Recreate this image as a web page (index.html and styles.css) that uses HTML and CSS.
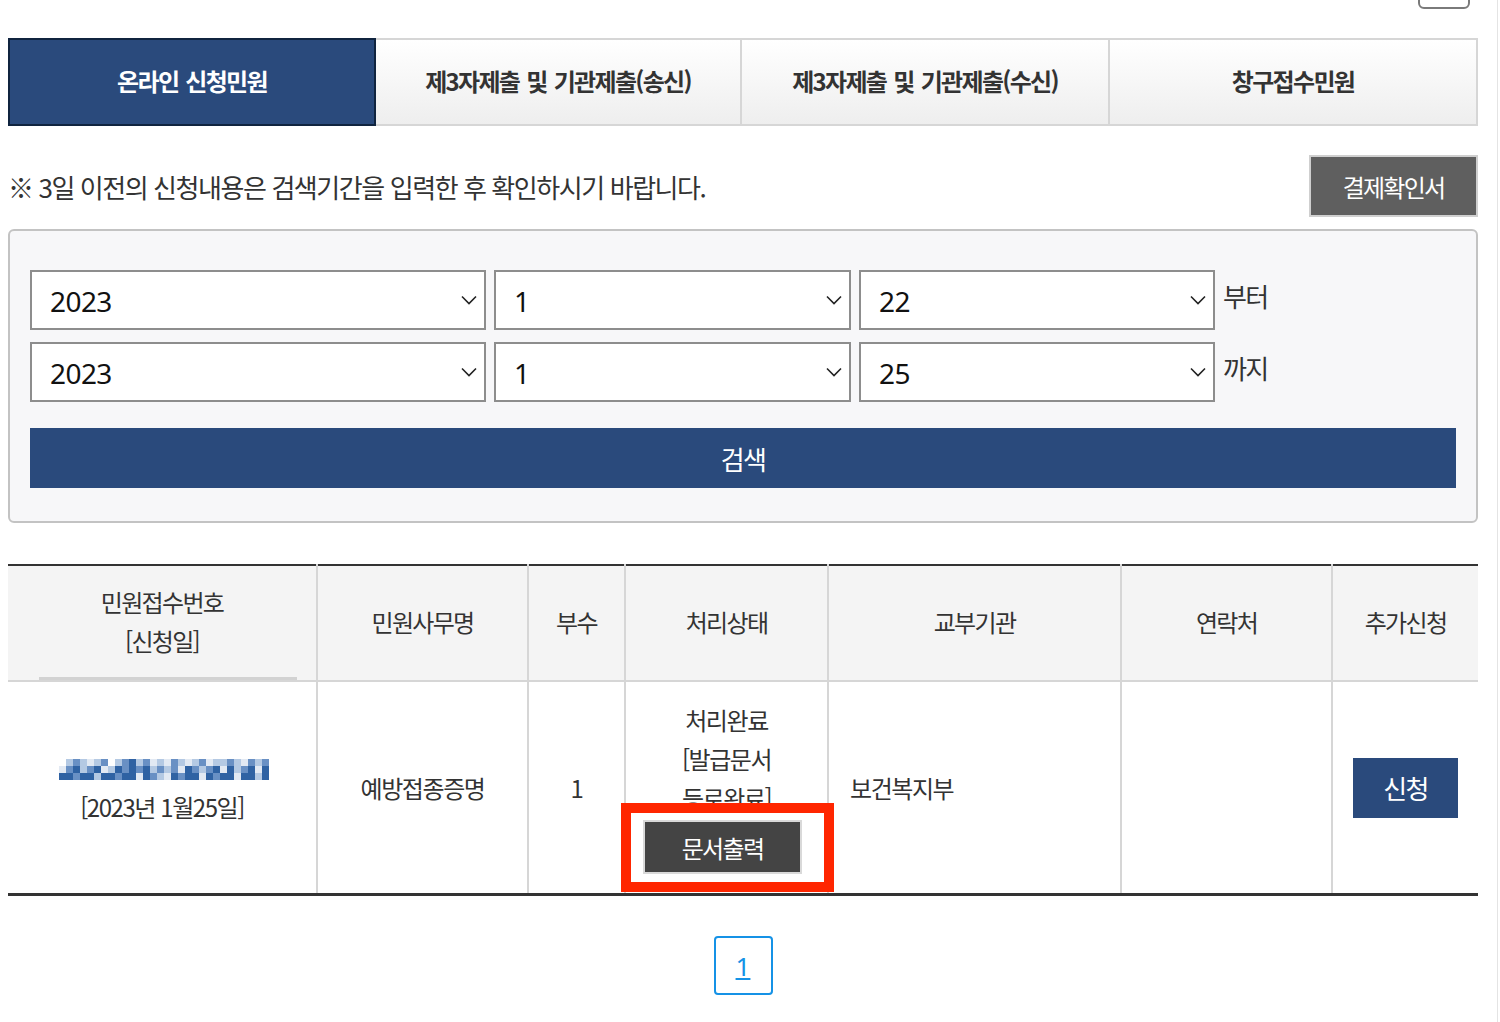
FILE: index.html
```html
<!DOCTYPE html>
<html lang="ko">
<head>
  <meta charset="UTF-8" />
  <meta name="viewport" content="width=device-width, initial-scale=1.0"/>
  <title>신청민원 조회</title>
  <link rel="stylesheet" href="styles.css">
</head>
<body>
  <div class="page">
    <div class="container">

      <div class="top-bar">
        <div class="top-btn"></div>
      </div>

      <div class="tabs">
        <div class="tab active">온라인 신청민원</div>
        <div class="tab">제3자제출 및 기관제출(송신)</div>
        <div class="tab">제3자제출 및 기관제출(수신)</div>
        <div class="tab">창구접수민원</div>
      </div>

      <div class="notice-row">
        <p class="notice">※ 3일 이전의 신청내용은 검색기간을 입력한 후 확인하시기 바랍니다.</p>
        <button class="btn-receipt">결제확인서</button>
      </div>

      <div class="search-box">
        <div class="date-row">
          <div class="select-wrap year">
            <select><option>2023</option></select>
            <svg class="chevron" viewBox="0 0 16 10"><path d="M1 1.5l7 7 7-7"/></svg>
          </div>
          <div class="select-wrap month">
            <select><option>1</option></select>
            <svg class="chevron" viewBox="0 0 16 10"><path d="M1 1.5l7 7 7-7"/></svg>
          </div>
          <div class="select-wrap day">
            <select><option>22</option></select>
            <svg class="chevron" viewBox="0 0 16 10"><path d="M1 1.5l7 7 7-7"/></svg>
          </div>
          <span class="date-label">부터</span>
        </div>
        <div class="date-row">
          <div class="select-wrap year">
            <select><option>2023</option></select>
            <svg class="chevron" viewBox="0 0 16 10"><path d="M1 1.5l7 7 7-7"/></svg>
          </div>
          <div class="select-wrap month">
            <select><option>1</option></select>
            <svg class="chevron" viewBox="0 0 16 10"><path d="M1 1.5l7 7 7-7"/></svg>
          </div>
          <div class="select-wrap day">
            <select><option>25</option></select>
            <svg class="chevron" viewBox="0 0 16 10"><path d="M1 1.5l7 7 7-7"/></svg>
          </div>
          <span class="date-label">까지</span>
        </div>
        <button class="btn-search">검색</button>
      </div>

      <table class="result-table">
        <colgroup>
          <col style="width:309px">
          <col style="width:211px">
          <col style="width:97px">
          <col style="width:203px">
          <col style="width:293px">
          <col style="width:211px">
          <col style="width:146px">
        </colgroup>
        <thead>
          <tr>
            <th class="first-th">민원접수번호<br>[신청일]</th>
            <th>민원사무명</th>
            <th>부수</th>
            <th>처리상태</th>
            <th>교부기관</th>
            <th>연락처</th>
            <th>추가신청</th>
          </tr>
        </thead>
        <tbody>
          <tr>
            <td class="receipt">
              <!-- 접수번호 모자이크 처리 -->
              <svg class="masked-no" viewBox="0 0 210 21">
                <path fill="#e2e9f3" d="M28 0h7v7h-7zM91 0h7v7h-7zM105 0h7v7h-7zM126 0h7v7h-7zM147 0h7v7h-7zM182 0h7v7h-7zM0 7h7v7h-7zM42 7h7v7h-7zM119 7h7v7h-7zM161 7h7v7h-7zM196 7h7v7h-7zM77 14h7v7h-7zM105 14h7v7h-7zM140 14h7v7h-7zM175 14h7v7h-7z"/>
                <path fill="#b4c9e3" d="M7 0h7v7h-7zM21 0h7v7h-7zM35 0h7v7h-7zM56 0h7v7h-7zM77 0h7v7h-7zM98 0h7v7h-7zM119 0h7v7h-7zM133 0h7v7h-7zM154 0h14v7h-14zM175 0h7v7h-7zM196 0h7v7h-7zM21 7h7v7h-7zM49 7h7v7h-7zM91 7h7v7h-7zM105 7h7v7h-7zM140 7h7v7h-7zM175 7h7v7h-7zM35 14h7v7h-7zM98 14h7v7h-7zM196 14h7v7h-7z"/>
                <path fill="#6990c4" d="M14 0h7v7h-7zM42 0h7v7h-7zM63 0h7v7h-7zM84 0h7v7h-7zM112 0h7v7h-7zM140 0h7v7h-7zM168 0h7v7h-7zM189 0h7v7h-7zM203 0h7v7h-7zM7 7h7v7h-7zM28 7h7v7h-7zM63 7h7v7h-7zM77 7h7v7h-7zM98 7h7v7h-7zM112 7h7v7h-7zM133 7h7v7h-7zM147 7h7v7h-7zM182 7h7v7h-7zM14 14h7v7h-7zM56 14h7v7h-7zM91 14h7v7h-7zM119 14h7v7h-7zM154 14h7v7h-7z"/>
                <path fill="#2f62a3" d="M70 0h7v7h-7zM14 7h7v7h-7zM35 7h7v7h-7zM56 7h7v7h-7zM70 7h7v7h-7zM84 7h7v7h-7zM126 7h7v7h-7zM154 7h7v7h-7zM168 7h7v7h-7zM189 7h7v7h-7zM203 7h7v7h-7zM0 14h14v7h-14zM21 14h14v7h-14zM42 14h14v7h-14zM63 14h14v7h-14zM84 14h7v7h-7zM112 14h7v7h-7zM126 14h14v7h-14zM147 14h7v7h-7zM161 14h14v7h-14zM182 14h14v7h-14zM203 14h7v7h-7z"/>
              </svg>
              <div>[2023년 1월25일]</div>
            </td>
            <td>예방접종증명</td>
            <td>1</td>
            <td class="status">
              처리완료<br>[발급문서<br>등로완료]
              <div><button class="btn-print">문서출력</button></div>
              <span class="highlight"></span>
            </td>
            <td class="left">보건복지부</td>
            <td></td>
            <td><button class="btn-apply">신청</button></td>
          </tr>
        </tbody>
      </table>

      <div class="pagination">
        <a href="#" class="page-num">1</a>
      </div>

    </div>
  </div>
</body>
</html>
```

FILE: styles.css
```css
body {
  margin: 0;
  padding: 0;
  font-family: "Noto Sans CJK KR", "Noto Sans", sans-serif;
  color: #333;
  background: #fff;
}

.page {
  width: 1497px;
  min-height: 1022px;
  border-right: 1px solid #e4e4e4;
}

.container {
  width: 1470px;
  margin-left: 8px;
}

/* top edge, partly scrolled out */
.top-bar {
  display: flex;
  justify-content: flex-end;
  height: 9px;
}

.top-btn {
  width: 52px;
  height: 22px;
  margin-top: -13px;
  margin-right: 8px;
  border: 2px solid #7a7a7a;
  border-radius: 6px;
  box-sizing: border-box;
}

/* tabs */
.tabs {
  display: grid;
  grid-template-columns: 368px 366px 368px 368px;
  margin-top: 29px;
  height: 88px;
}

.tab {
  display: flex;
  align-items: center;
  justify-content: center;
  padding-bottom: 3px;
  font-size: 24px;
  font-weight: bold;
  letter-spacing: -0.07em;
  word-spacing: 2px;
  color: #333;
  background: linear-gradient(#fff, #eeeeee);
  border: 2px solid #d6d6d6;
  border-left: none;
  box-sizing: border-box;
}

.tab.active {
  background: #2a4a7c;
  color: #fff;
  border: 2px solid #10243f;
}

/* notice */
.notice-row {
  display: flex;
  justify-content: space-between;
  align-items: center;
  margin-top: 29px;
}

.notice {
  margin: 0;
  font-size: 26px;
  letter-spacing: -0.055em;
  color: #333;
}

.btn-receipt {
  width: 169px;
  height: 62px;
  background: #5f5f5f;
  border: 2px solid #cfcfcf;
  color: #fff;
  font-family: inherit;
  font-size: 24px;
  letter-spacing: -0.075em;
  box-sizing: border-box;
}

/* search box */
.search-box {
  margin-top: 12px;
  border: 2px solid #c3c3c3;
  border-radius: 6px;
  background: #f7f7f9;
  padding: 39px 20px 33px;
}

.date-row {
  display: flex;
  gap: 8px;
  align-items: flex-start;
}

.date-row + .date-row {
  margin-top: 12px;
}

.select-wrap {
  position: relative;
  height: 60px;
}

.select-wrap.year { width: 456px; }
.select-wrap.month { width: 357px; }
.select-wrap.day { width: 356px; }

.select-wrap select {
  width: 100%;
  height: 100%;
  appearance: none;
  -webkit-appearance: none;
  border: 2px solid #8d8d8d;
  border-radius: 0;
  background: #fff;
  font-family: "Noto Sans", sans-serif;
  font-size: 28px;
  color: #111;
  padding: 2px 0 0 18px;
  letter-spacing: -0.02em;
}

.chevron {
  position: absolute;
  right: 9px;
  top: 25px;
  width: 16px;
  height: 10px;
  fill: none;
  stroke: #222;
  stroke-width: 1.6;
  pointer-events: none;
}

.date-label {
  font-size: 26px;
  line-height: 40px;
  margin-top: 6px;
  letter-spacing: -0.06em;
}

.btn-search {
  display: block;
  margin-top: 26px;
  width: 100%;
  height: 60px;
  background: #2a4a7c;
  color: #fff;
  border: none;
  font-family: inherit;
  font-size: 26px;
  letter-spacing: -0.06em;
}

/* result table */
.result-table {
  width: 1470px;
  margin-top: 41px;
  border-collapse: collapse;
  table-layout: fixed;
  border-top: 2px solid #333;
  border-bottom: 3px solid #333;
}

.result-table th {
  position: relative;
  height: 110px;
  padding: 0 0 4px;
  background: #f4f4f4;
  font-size: 24px;
  font-weight: normal;
  line-height: 39px;
  letter-spacing: -0.07em;
  color: #333;
  border-left: 2px solid #d6d6d6;
  border-bottom: 2px solid #d6d6d6;
}

.result-table th:first-child,
.result-table td:first-child {
  border-left: none;
}

.first-th::after {
  content: "";
  position: absolute;
  left: 31px;
  right: 19px;
  bottom: 0;
  height: 3px;
  background: #d2d2d2;
}

.result-table td {
  position: relative;
  padding: 0;
  text-align: center;
  vertical-align: middle;
  font-size: 24px;
  line-height: 39px;
  letter-spacing: -0.06em;
  color: #333;
  border-left: 2px solid #d6d6d6;
}

.result-table td.receipt {
  padding-top: 10px;
}

.result-table td.left {
  text-align: left;
  padding-left: 21px;
}

.masked-no {
  display: block;
  width: 210px;
  height: 21px;
  margin: 0 auto 7px;
  position: relative;
  left: 2px;
}

.result-table td.status {
  vertical-align: top;
  padding: 18px 0 19px;
}

.btn-print {
  width: 159px;
  height: 54px;
  margin-top: 3px;
  margin-right: 8px;
  background: #444;
  border: 2px solid #d9d9d9;
  color: #fff;
  font-family: inherit;
  font-size: 24px;
  letter-spacing: -0.07em;
  box-sizing: border-box;
}

.highlight {
  position: absolute;
  left: -5px;
  top: 121px;
  width: 213px;
  height: 89px;
  border: 10px solid #ff2600;
  box-sizing: border-box;
}

.btn-apply {
  width: 105px;
  height: 60px;
  background: #2a4a7c;
  color: #fff;
  border: none;
  font-family: inherit;
  font-size: 26px;
  letter-spacing: -0.06em;
}

/* pagination */
.pagination {
  display: flex;
  justify-content: center;
  margin-top: 40px;
}

.page-num {
  display: flex;
  align-items: center;
  justify-content: center;
  width: 59px;
  height: 59px;
  box-sizing: border-box;
  border: 2px solid #1592e6;
  border-radius: 4px;
  color: #1592e6;
  font-family: "Noto Sans", sans-serif;
  font-size: 26px;
  text-decoration: underline;
}
```
